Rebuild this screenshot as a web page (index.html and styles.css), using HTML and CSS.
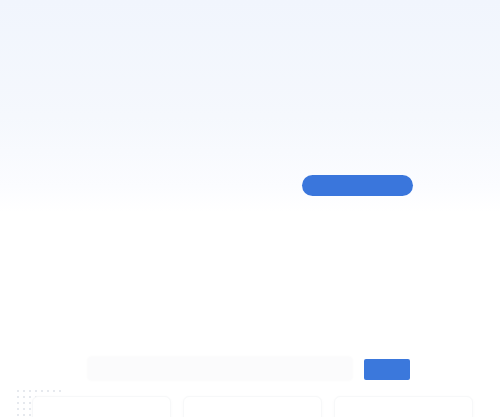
FILE: index.html
```html
<!DOCTYPE html>
<html>
<head>
<meta charset="utf-8">
<link rel="stylesheet" href="styles.css">
</head>
<body>
<div class="page">
  <section class="hero">
    <div class="hero-actions">
      <a class="pill" href="#" aria-label="Get started"></a>
    </div>
  </section>
  <section class="search-section">
    <form class="search">
      <input class="search-input" type="text" aria-label="Search">
      <button class="search-btn" type="button" aria-label="Search"></button>
    </form>
  </section>
  <section class="cards-section">
    <div class="dots"></div>
    <div class="cards">
      <div class="card"></div>
      <div class="card"></div>
      <div class="card"></div>
    </div>
  </section>
</div>
</body>
</html>
```
FILE: styles.css
```css
* { box-sizing: border-box; }
html, body { margin: 0; padding: 0; overflow: hidden; }
body {
  width: 500px;
  height: 417px;
  background: #ffffff;
  font-family: "Inter", "Liberation Sans", sans-serif;
}
.page { display: flex; flex-direction: column; height: 417px; overflow: hidden; }
.hero {
  flex: none;
  height: 212px;
  background: linear-gradient(180deg, #f1f5fd 0%, #f5f8fd 55%, #fbfcff 88%, #ffffff 100%);
  display: flex;
  flex-direction: column;
  justify-content: flex-end;
  padding-bottom: 16px;
}
.hero-actions {
  display: flex;
  justify-content: flex-end;
  padding-right: 87px;
}
.pill {
  display: block;
  width: 111px;
  height: 21px;
  border-radius: 11px;
  background: #3a76dc;
}
.search-section {
  flex: none;
  padding-top: 145px;
  display: flex;
  justify-content: center;
}
.search {
  display: flex;
  align-items: center;
  gap: 12px;
  margin-right: 2px;
}
.search-input {
  width: 264px;
  height: 23px;
  border: none;
  border-radius: 3px;
  background: #fbfbfc;
  box-shadow: 0 0 3px rgba(0,0,0,0.04);
  outline: none;
}
.search-btn {
  width: 46px;
  height: 21px;
  border: none;
  border-radius: 2px;
  background: #3b78dc;
  margin-top: 2px;
}
.cards-section {
  flex: none;
  position: relative;
  padding-top: 16px;
}
.dots {
  position: absolute;
  left: 15px;
  top: 8px;
  width: 46px;
  height: 40px;
  background-image: radial-gradient(circle, #e6e9ee 1px, transparent 1.3px);
  background-size: 6px 6px;
}
.cards {
  position: relative;
  display: flex;
  gap: 12px;
  padding: 0 27px 0 32px;
}
.card {
  flex: 1;
  height: 40px;
  background: #ffffff;
  border-radius: 6px;
  border: 1px solid #f7f8f9;
  box-shadow: 0 1px 4px rgba(0,0,0,0.025);
}
```
